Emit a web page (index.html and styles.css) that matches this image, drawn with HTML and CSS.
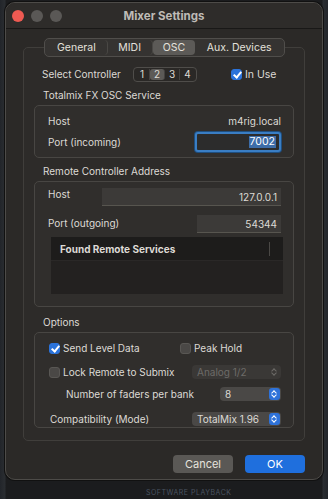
FILE: index.html
```html
<!DOCTYPE html>
<html lang="en">
<head>
  <meta charset="UTF-8" />
  <meta name="viewport" content="width=device-width, initial-scale=1.0" />
  <title>Mixer Settings</title>
  <link rel="stylesheet" href="styles.css">
</head>
<body>
  <div class="desk">
    <div class="window">
      <!-- Titelleiste -->
      <div class="titlebar">
        <div class="lights">
          <span class="light red"></span>
          <span class="light"></span>
          <span class="light"></span>
        </div>
        <div class="title">Mixer Settings</div>
      </div>

      <div class="content">
        <div class="tabs">
          <span class="tab t-general">General</span>
          <span class="tab t-midi">MIDI</span>
          <span class="tab t-osc active">OSC</span>
          <span class="tab t-aux">Aux. Devices</span>
        </div>

        <div class="group">
          <div class="ctrl-row">
            <span class="label ctrl-label">Select Controller</span>
            <div class="segs">
              <span class="seg">1</span>
              <span class="seg on">2</span>
              <span class="seg">3</span>
              <span class="seg">4</span>
            </div>
            <label class="check in-use"><span class="box checked"></span>In Use</label>
          </div>

          <div class="sec-title s1">Totalmix FX OSC Service</div>
          <div class="inner box1">
            <div class="row r-host">
              <span class="label">Host</span>
              <span class="value">m4rig.local</span>
            </div>
            <div class="row r-port">
              <span class="label">Port (incoming)</span>
              <span class="field focus"><span class="sel">7002</span></span>
            </div>
          </div>

          <div class="sec-title s2">Remote Controller Address</div>
          <div class="inner box2">
            <div class="row r-rhost">
              <span class="label">Host</span>
              <span class="field wide">127.0.0.1</span>
            </div>
            <div class="row r-rport">
              <span class="label">Port (outgoing)</span>
              <span class="field">54344</span>
            </div>
            <div class="table">
              <div class="thead"><span>Found Remote Services</span><i class="col-sep"></i></div>
              <div class="tbody"></div>
            </div>
          </div>

          <div class="sec-title s3">Options</div>
          <div class="inner box3">
            <div class="opt-row o1">
              <label class="check c-send"><span class="box checked"></span>Send Level Data</label>
              <label class="check c-peak"><span class="box"></span>Peak Hold</label>
            </div>
            <div class="opt-row o2">
              <label class="check c-lock"><span class="box"></span>Lock Remote to Submix</label>
              <span class="popup disabled">Analog 1/2<span class="arrows grey"></span></span>
            </div>
            <div class="opt-row o3">
              <span class="label">Number of faders per bank</span>
              <span class="popup small">8<span class="arrows"></span></span>
            </div>
            <div class="opt-row o4">
              <span class="label">Compatibility (Mode)</span>
              <span class="popup">TotalMix 1.96<span class="arrows"></span></span>
            </div>
          </div>
        </div>

        <div class="buttons">
          <span class="btn cancel">Cancel</span>
          <span class="btn ok">OK</span>
        </div>
      </div>
    </div>
    <div class="under">SOFTWARE PLAYBACK</div>
  </div>
</body>
</html>
```

FILE: styles.css
```css
* {
  box-sizing: border-box;
  margin: 0;
  padding: 0;
}

html, body {
  width: 328px;
  height: 499px;
  overflow: hidden;
  background: #1d1e20;
  font-family: Inter, 'Liberation Sans', sans-serif;
  font-size: 10px;
  color: #dddad5;
}

.desk {
  position: relative;
  height: 499px;
  padding: 2px 5px 0 5px;
  background: linear-gradient(90deg, #22252a 0, #2a2d31 5px, #1b1c1e 6px, #1b1c1e 322px, #2a2d31 323px, #22252a 328px);
}

.under {
  position: absolute;
  left: 146px;
  bottom: 2px;
  font-size: 7px;
  color: #4a5360;
  letter-spacing: 0.5px;
  white-space: nowrap;
}

.window {
  width: 318px;
  height: 478px;
  background: #2b2927;
  border: 1px solid #4d4b48;
  border-radius: 10px;
  box-shadow: 0 0 0 1px #111;
  overflow: hidden;
}

.titlebar {
  height: 26px;
  display: flex;
  align-items: center;
  position: relative;
  background: #2e2c2a;
  border-bottom: 1px solid #191817;
}

.lights {
  display: flex;
  gap: 7px;
  padding-left: 6px;
}

.light {
  width: 12px;
  height: 12px;
  border-radius: 50%;
  background: #5a5856;
}

.light.red {
  background: #ee5a52;
}

.title {
  position: absolute;
  left: 0;
  right: 0;
  text-align: center;
  font-weight: bold;
  font-size: 11.5px;
  color: #bebbb6;
  pointer-events: none;
}

.content {
  padding: 9px 17px 0 17px;
}

/* Tabs */
.tabs {
  position: relative;
  z-index: 2;
  display: flex;
  width: 241px;
  height: 19px;
  margin-left: 21px;
  margin-bottom: -10px;
  background: #353331;
  border: 1px solid #504e4b;
  border-radius: 5px;
  padding: 1px;
}

.tab {
  display: flex;
  align-items: center;
  justify-content: center;
  font-size: 10.5px;
  color: #e4e1dc;
  border-radius: 4px;
  border-right: 1px solid #4a4845;
}

.t-general { width: 62px; }
.t-midi { width: 45px; }
.t-osc { width: 43px; border-right: none; }
.t-aux { width: 88px; border-right: none; }

.tab.active {
  background: #5c5a57;
}

/* Group box */
.group {
  height: 394px;
  border: 1px solid #403e3b;
  border-radius: 5px;
  background: #2d2b29;
  padding: 0 10px;
}

.ctrl-row {
  display: flex;
  align-items: center;
  height: 16px;
  margin-top: 18px;
  padding-left: 8px;
}

.label {
  white-space: nowrap;
}

.ctrl-label {
  width: 91px;
}

.segs {
  display: flex;
  height: 15px;
  border: 1px solid #4f4d4a;
  border-radius: 4px;
  background: #2a2826;
  padding: 1px;
}

.seg {
  width: 15px;
  display: flex;
  align-items: center;
  justify-content: center;
  font-size: 10px;
  border-right: 1px solid #444240;
}

.seg:last-child {
  border-right: none;
}

.seg.on {
  background: #5c5a57;
  border-radius: 3px;
}

.check {
  display: flex;
  align-items: center;
  gap: 3px;
  white-space: nowrap;
}

.in-use {
  margin-left: 34px;
  font-size: 10.5px;
}

.box {
  width: 11px;
  height: 11px;
  border-radius: 3px;
  background: #4a4846;
  border: 1px solid #595754;
  position: relative;
}

.box.checked {
  background: #2b73da;
  border-color: #2b73da;
}

.box.checked::after {
  content: "";
  position: absolute;
  left: 3px;
  top: 0px;
  width: 3px;
  height: 6px;
  border: solid #fff;
  border-width: 0 2px 2px 0;
  transform: rotate(40deg);
}

.sec-title {
  height: 14px;
  line-height: 14px;
  padding-left: 9px;
  white-space: nowrap;
}

.s1 { margin-top: 6px; }
.s2 { margin-top: 6px; }
.s3 { margin-top: 8px; }

.inner {
  margin-top: 3px;
  border: 1px solid #484643;
  border-radius: 5px;
  background: #302e2c;
  padding: 0 12px 0 13px;
}

.box1 { height: 53px; }
.box2 { height: 126px; }
.box3 { height: 96px; padding-left: 14px; }

.row {
  display: flex;
  align-items: center;
  justify-content: space-between;
}

.r-host { height: 15px; margin-top: 7px; }
.r-port { height: 20px; margin-top: 4px; }

.field {
  display: flex;
  align-items: center;
  justify-content: flex-end;
  width: 84px;
  height: 18px;
  padding-right: 4px;
  background: #3c3a38;
  border-bottom: 1px solid #57554f;
}

.field.wide {
  width: 179px;
}

.field.focus {
  width: 86px;
  height: 20px;
  background: #2c2c2c;
  border: 2px solid #3a7ec4;
  border-radius: 3px;
  box-shadow: 0 0 0 1px #1f4f80;
  padding-right: 3px;
}

.sel {
  background: #3d6da8;
  color: #fff;
  line-height: 12px;
  padding: 0 1px;
  font-size: 10.5px;
}

.r-rhost { height: 18px; margin-top: 6px; }
.r-rhost .label { margin-top: -6px; }
.r-rport { height: 18px; margin-top: 9px; }
.r-rport .label { margin-top: -3px; }

.table {
  margin-top: 4px;
  height: 57px;
  width: 232px;
  margin-left: 3px;
  background: #232120;
}

.thead {
  height: 24px;
  display: flex;
  align-items: center;
  justify-content: space-between;
  padding: 0 13px 0 9px;
  background: #1d1c1b;
  font-weight: bold;
  border-bottom: 1px solid #2a2827;
}

.col-sep {
  width: 1px;
  height: 14px;
  background: #4a4845;
}

/* Options */
.opt-row {
  display: flex;
  align-items: center;
  justify-content: space-between;
}

.o1 { height: 14px; margin-top: 8px; justify-content: flex-start; }
.c-send { width: 131px; }
.o2 { height: 14px; margin-top: 10px; }
.o3 { height: 14px; margin-top: 8px; padding-left: 17px; }
.o4 { height: 14px; margin-top: 11px; padding-left: 1px; }

.popup {
  position: relative;
  display: flex;
  align-items: center;
  width: 89px;
  height: 14px;
  padding-left: 5px;
  background: #4a4846;
  border-radius: 4px;
}

.popup.small {
  width: 61px;
}

.popup.disabled {
  background: #3a3836;
  color: #6d6b68;
}

.arrows {
  position: absolute;
  right: 1px;
  top: 1px;
  width: 11px;
  height: 12px;
  border-radius: 3px;
  background: #2e72d9;
}

.arrows::before,
.arrows::after {
  content: "";
  position: absolute;
  left: 3px;
  width: 3px;
  height: 3px;
  border: solid #fff;
  border-width: 1.5px 1.5px 0 0;
}

.arrows::before {
  top: 3px;
  transform: rotate(-45deg);
}

.arrows::after {
  top: 5px;
  transform: rotate(135deg);
}

.arrows.grey {
  background: none;
}

.arrows.grey::before,
.arrows.grey::after {
  border-color: #6d6b68;
}

/* Buttons */
.buttons {
  display: flex;
  justify-content: flex-end;
  gap: 12px;
  margin-top: 14px;
}

.btn {
  display: flex;
  align-items: center;
  justify-content: center;
  width: 60px;
  height: 18px;
  border-radius: 4px;
  font-size: 11px;
  color: #e6e3de;
}

.cancel {
  background: #5a5855;
}

.ok {
  background: #1f6fdd;
  color: #fff;
}
```
